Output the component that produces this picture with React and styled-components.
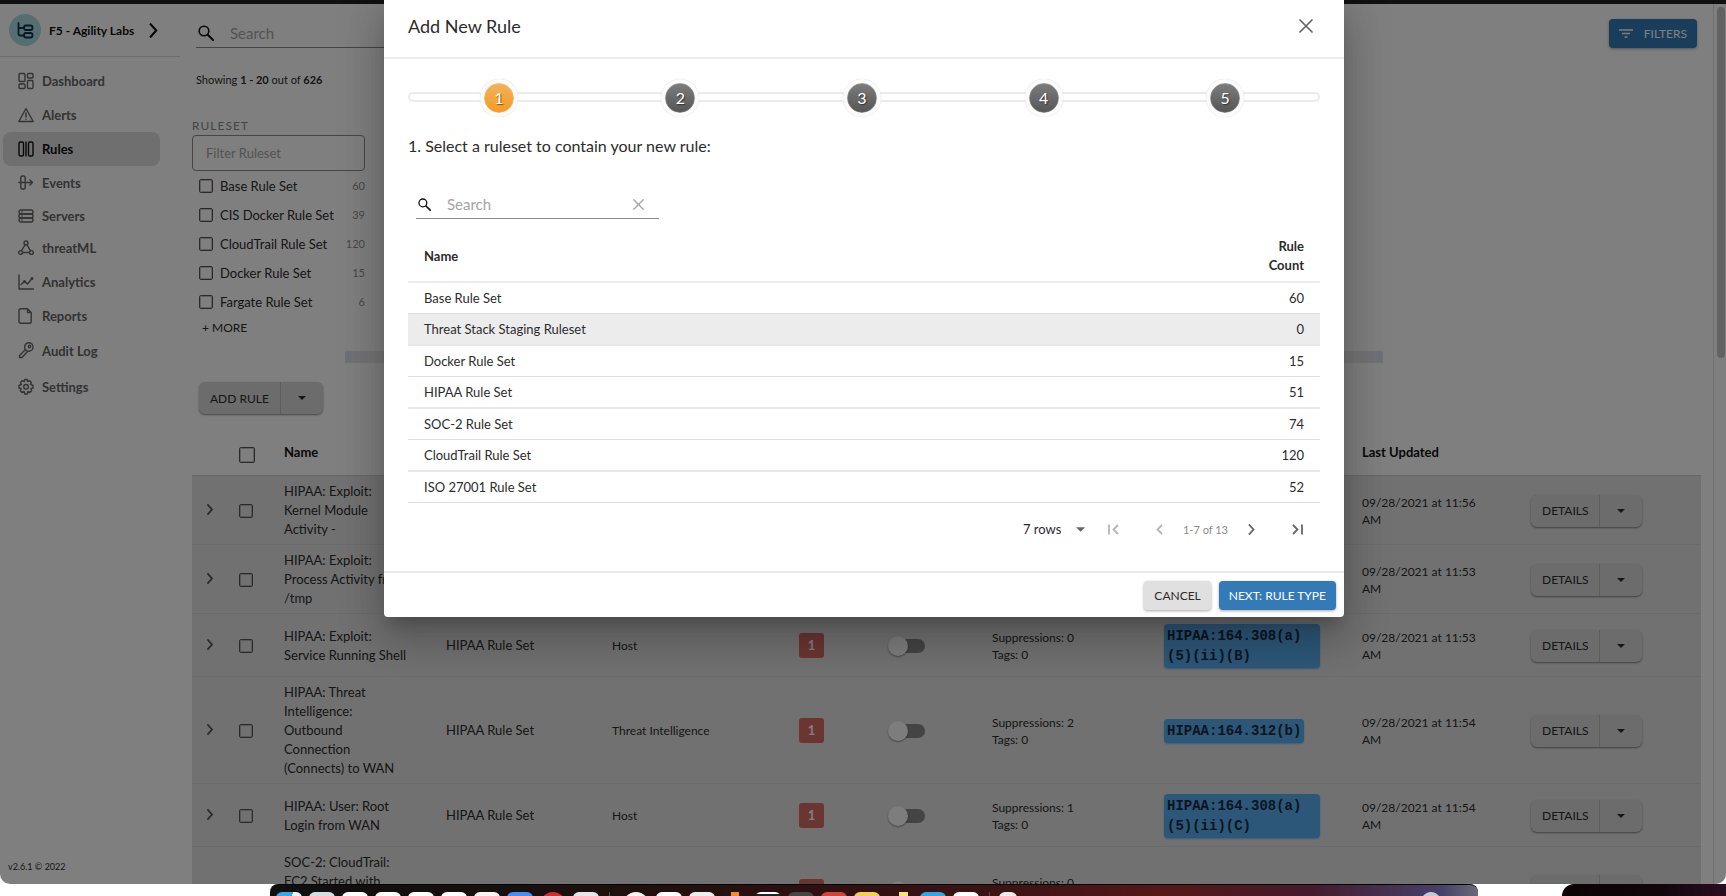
import React from "react";
import styled, { createGlobalStyle, css } from "styled-components";

const GlobalStyle = createGlobalStyle`
  *, *::before, *::after { box-sizing: border-box; }
  body {
    margin: 0;
    background: #fff;
    color: #2c2c2c;
    font-family: Lato, "Open Sans", sans-serif;
    font-size: 13px;
  }
  button, input, select { font: inherit; color: inherit; }
  input::placeholder { color: #a5a5a5; opacity: 1; }
`;

/* ---------- desktop and browser window ---------- */

const Desktop = styled.div`
  position: relative;
  display: flex;
  flex-direction: column;
  height: 100vh;
  overflow: hidden;
`;

const BrowserEdge = styled.div`
  flex: none;
  height: 4px;
  background: #111;
`;

const Window = styled.div`
  position: relative;
  display: flex;
  flex: 1;
  min-height: 0;
  overflow: hidden;
  background: #fff;
  border-radius: 0 0 10px 10px;

  &::after {
    content: "";
    position: absolute;
    inset: 0;
    background: rgba(0, 0, 0, 0.5);
  }
`;

const DockStrip = styled.div`
  display: flex;
  flex: none;
  justify-content: space-between;
  height: 12px;
  padding-left: 270px;
`;

const Dock = styled.div`
  display: flex;
  gap: 7px;
  width: 1208px;
  padding: 7px 6px 0;
  overflow: hidden;
  border-top: 1px solid #000;
  border-radius: 8px 8px 0 0;
  background: linear-gradient(90deg, #0f0f0f 0%, #17100f 20%, #2a0f10 40%, #3a1214 58%, #541818 74%, #451a2c 86%, #46406a 97%, #6b6b78 100%);
`;

const DockIcon = styled.span`
  flex: none;
  width: ${(p) => p.$w || 26}px;
  height: 26px;
  margin-left: ${(p) => p.$gap || 0}px;
  border-radius: ${(p) => (p.$round ? "50%" : "6px")};
  background: ${(p) => p.$c};
`;

const Wallpaper = styled.div`
  width: 164px;
  background: linear-gradient(90deg, #0a0405, #12060a 60%, #2a0d22);
  border-top-left-radius: 12px;
`;

/* ---------- sidebar ---------- */

const Sidebar = styled.aside`
  display: flex;
  flex: none;
  flex-direction: column;
  width: 180px;
`;

const Org = styled.button`
  display: flex;
  align-items: center;
  height: 53px;
  padding: 0 22px 0 9px;
  border: 0;
  border-bottom: 1px solid #dcdcdc;
  background: none;
  color: #111;
  font-size: 12px;
  font-weight: 700;
  text-align: left;
`;

const OrgName = styled.span`
  flex: 1;
  padding-left: 8px;
  white-space: nowrap;
`;

const Nav = styled.nav`
  display: flex;
  flex: 1;
  flex-direction: column;
  padding: 7px 20px 0 3px;
`;

const NavLink = styled.a`
  display: flex;
  align-items: center;
  gap: 8px;
  padding: 8px 15px;
  border-radius: 8px;
  color: ${(p) => (p.$active ? "#111" : "#666")};
  background: ${(p) => (p.$active ? "#dedede" : "none")};
  font-size: 13px;
  font-weight: 700;
  line-height: 16px;
  text-decoration: none;

  svg { flex: none; }
`;

const Version = styled.footer`
  padding: 0 8px 10px;
  font-size: 9px;
  line-height: 14px;
`;

/* ---------- main column ---------- */

const Main = styled.main`
  flex: 1;
  min-width: 0;
  padding: 15px 12px 0;
  overflow: hidden;
`;

const ScrollTrack = styled.div`
  flex: none;
  width: 13px;
  padding: 3px 1px 0 3px;
  border-left: 1px solid #e4e4e4;
`;

const ScrollThumb = styled.div`
  width: 8px;
  height: 40%;
  border-radius: 4px;
  background: #c4c4c4;
`;

const Topbar = styled.div`
  display: flex;
  align-items: flex-start;
  justify-content: space-between;
  padding: 0 4px;
`;

const SearchField = styled.label`
  display: flex;
  align-items: center;
  width: 243px;
  height: 29px;
  margin-left: ${(p) => (p.$inset ? 8 : 0)}px;
  border-bottom: 1px solid #8a8a8a;

  input {
    flex: 1;
    min-width: 0;
    padding: 0 0 0 14px;
    border: 0;
    outline: 0;
    background: none;
    font-size: 15px;
  }
`;

const IconButton = styled.button`
  display: flex;
  align-items: center;
  justify-content: center;
  width: ${(p) => p.$w || 24}px;
  height: 32px;
  padding: 0;
  border: 0;
  background: none;
  color: ${(p) => p.$c || "#666"};
`;

const Button = styled.button`
  display: inline-flex;
  align-items: center;
  justify-content: center;
  gap: 11px;
  height: 29px;
  padding: 0 10px;
  border: 0;
  border-radius: 4px;
  background: ${(p) => (p.$primary ? "#337ab7" : "#e0e0e0")};
  color: ${(p) => (p.$primary ? "#fff" : "#2c2c2c")};
  font-size: 12px;
  white-space: nowrap;
  box-shadow: 0 1px 3px rgba(0, 0, 0, 0.35);
`;

const Showing = styled.p`
  margin: 24px 4px 0;
  font-size: 11px;
  line-height: 16px;
`;

const Facet = styled.section`
  width: 173px;
  margin-top: 30px;
`;

const FacetLabel = styled.label`
  display: block;
  color: #8a8a8a;
  font-size: 12px;
  letter-spacing: 1px;
  line-height: 16px;
`;

const FacetInput = styled.input`
  display: block;
  width: 100%;
  height: 36px;
  margin-top: 1px;
  padding: 0 13px;
  border: 1px solid #8c8c8c;
  border-radius: 4px;
  outline: 0;
  background: none;
  font-size: 13px;
`;

const CheckRow = styled.label`
  display: flex;
  align-items: center;
  height: 29px;
  padding-left: 7px;

  span { flex: 1; padding-left: 7px; white-space: nowrap; }
  em { color: #8f8f8f; font-size: 11px; font-style: normal; }
`;

const Checkbox = styled.input.attrs({ type: "checkbox" })`
  flex: none;
  display: block;
  width: ${(p) => p.$size || 14}px;
  height: ${(p) => p.$size || 14}px;
  margin: 0;
  appearance: none;
  border: 1px solid #555;
  border-radius: 2px;
  outline: 1px solid rgba(85, 85, 85, 0.35);
  outline-offset: -2px;
`;

const More = styled.button`
  display: block;
  padding: 0 10px;
  border: 0;
  background: none;
  font-size: 12px;
  line-height: 24px;
`;

const Strip = styled.div`
  height: 12px;
  margin: 11px 318px 0 153px;
  background: linear-gradient(90deg, #dde2ec, #ebebeb 3%, #ebebeb 97%, #dde2ec);
`;

const Split = styled.div`
  display: inline-flex;
  height: 32px;
  margin: ${(p) => p.$margin || 0};
  border-radius: 6px;
  background: #d8d8d8;
  box-shadow: 0 1px 2px rgba(0, 0, 0, 0.45);

  button {
    display: flex;
    align-items: center;
    justify-content: center;
    padding: 0 11px;
    border: 0;
    background: none;
    font-size: 12px;
    white-space: nowrap;
  }
  button + button { width: 43px; border-left: 1px solid #b8b8b8; }
`;

/* ---------- rules table ---------- */

const RulesTable = styled.table`
  width: 100%;
  margin-top: 18px;
  border-collapse: separate;
  border-spacing: 0;
  table-layout: fixed;

  th {
    height: 44px;
    padding: 0 0 3px;
    border-bottom: 1px solid #cfcfcf;
    color: #111;
    font-weight: 700;
    text-align: left;
  }
  th:nth-child(2) { padding: 2px 0 0; }
  td {
    height: 63px;
    padding: 6px 0 5px;
    border-bottom: 1px solid #d6d6d6;
    background: #e3e3e3;
    font-size: 12px;
    line-height: 17px;
  }
  td:nth-child(3), td:nth-child(4) { font-size: 13px; }
`;

const RuleRow = styled.tr`
  ${(p) => p.$tall && css`
    td { height: 88px; }
    td:nth-child(3) { vertical-align: top; }
  `}
`;

const Cell = styled.div`
  padding: 0 ${(p) => p.$r || 0}px 0 ${(p) => p.$l || 0}px;
  color: ${(p) => p.$c || "inherit"};
  line-height: ${(p) => p.$lh || 17}px;
`;

const Severity = styled.span`
  display: flex;
  align-items: center;
  justify-content: center;
  width: 25px;
  height: 25px;
  border-radius: 3px;
  background: #d66a64;
  color: #fff;
  font-size: 13px;
  font-weight: 700;
`;

const Toggle = styled.input.attrs({ type: "checkbox", role: "switch" })`
  position: relative;
  display: block;
  width: 34px;
  height: 14px;
  margin: 0 0 0 3px;
  appearance: none;
  border-radius: 7px;
  background: #888;

  &::before {
    content: "";
    position: absolute;
    top: -3px;
    left: -3px;
    width: 20px;
    height: 20px;
    border-radius: 50%;
    background: #fafafa;
    box-shadow: 0 1px 2px rgba(0, 0, 0, 0.4);
  }
`;

const Tag = styled.code`
  display: inline-block;
  max-width: 100%;
  padding: 2px 3px;
  border-radius: 4px;
  background: #5aaef0;
  color: #1b2c40;
  font-family: "Liberation Mono", monospace;
  font-size: 14px;
  font-weight: 700;
  line-height: 20px;
  box-shadow: 0 1px 2px rgba(90, 174, 240, 0.8);
`;

/* ---------- dialog ---------- */

const Overlay = styled.div`
  position: absolute;
  inset: 0;
  display: flex;
  align-items: flex-start;
  justify-content: center;
  padding-left: 2px;
`;

const Dialog = styled.section`
  width: 960px;
  max-width: 100%;
  border-radius: 0 0 4px 4px;
  background: #fff;
  box-shadow: 0 11px 15px -7px rgba(0, 0, 0, 0.2),
    0 24px 38px 3px rgba(0, 0, 0, 0.14),
    0 9px 46px 8px rgba(0, 0, 0, 0.12);
`;

const DialogHeader = styled.header`
  display: flex;
  align-items: center;
  justify-content: space-between;
  height: 59px;
  padding: 0 26px 5px 24px;
  border-bottom: 2px solid #ebebeb;

  h2 { margin: 0; font-size: 18px; font-weight: 400; line-height: 28px; }
`;

const DialogBody = styled.div`
  padding: 20px 24px 26px;

  h3 {
    margin: 17px 0 32px;
    font-size: 16px;
    font-weight: 400;
    line-height: 24px;
  }
`;

const Steps = styled.ol`
  position: relative;
  display: grid;
  grid-template-columns: repeat(5, 1fr);
  margin: 0;
  padding: 0 4px 0 0;
  list-style: none;

  &::before {
    content: "";
    position: absolute;
    top: 13px;
    right: 0;
    left: 0;
    height: 10px;
    border: 2px solid #ebebeb;
    border-radius: 5px;
  }
`;

const Step = styled.li`
  position: relative;
  justify-self: center;
  display: flex;
  align-items: center;
  justify-content: center;
  width: 38px;
  height: 38px;
  border: 4px solid #fbfbfb;
  border-radius: 50%;
  background: ${(p) => (p.$active ? "linear-gradient(#f0b35c, #f79a22)" : "linear-gradient(#7d7d7d, #555)")};
  background-clip: padding-box;
  background-color: #fff;
  color: #fff;
  font-size: 16px;
  line-height: 28px;
  text-shadow: 1px 1px 1px rgba(0, 0, 0, 0.5);
  box-shadow: inset 0 0 0 1px rgba(255, 255, 255, 0.2), inset 0 0 1px #e2e2e2, 0 0 1px #c8c8c8;
`;

const RulesetTable = styled.table`
  width: 100%;
  margin-top: 12px;
  border-collapse: separate;
  border-spacing: 0;

  th {
    padding: 6px 16px;
    border-bottom: 2px solid #ebebeb;
    font-weight: 700;
    line-height: 19px;
    text-align: left;
  }
  th:last-child { width: 80px; text-align: right; }
  td {
    height: 31px;
    padding: 0 16px;
    border-bottom: 1px solid #dedede;
  }
  td:last-child { text-align: right; }
  tr:nth-child(even) td { height: 32px; border-bottom: 2px solid #e8e8e8; }
`;

const RulesetRow = styled.tr`
  background: ${(p) => (p.$hover ? "#ececec" : "none")};
`;

const Pager = styled.div`
  display: flex;
  align-items: center;
  justify-content: flex-end;
  margin-top: 10px;
  color: #8a8a8a;
  font-size: 11px;
`;

const RowsSelect = styled.label`
  display: flex;
  align-items: center;
  gap: 14px;
  margin-right: 6px;
  color: #2c2c2c;

  select {
    padding: 0;
    appearance: none;
    border: 0;
    background: none;
    font-size: 13px;
  }
  svg { color: #666; }
`;

const DialogFooter = styled.footer`
  display: flex;
  justify-content: flex-end;
  gap: 8px;
  padding: 8px 8px 7px;
  border-top: 2px solid #ebebeb;
`;

/* ---------- icons ---------- */

const Svg = ({ w = 16, h = 16, box, children, sw = 1.4 }) => (
  <svg width={w} height={h} viewBox={box || `0 0 ${w} ${h}`} fill="none" stroke="currentColor"
    strokeWidth={sw} strokeLinecap="round" strokeLinejoin="round" aria-hidden="true">
    {children}
  </svg>
);

const SearchIcon = ({ size }) => (
  <Svg w={size} h={size} box="0 0 16 16" sw={1.6}>
    <circle cx="6" cy="6" r="4.8" />
    <path d="M9.8 9.8 L15 15" strokeWidth="2" />
  </Svg>
);

const CloseIcon = ({ size }) => (
  <Svg w={size} h={size} box="0 0 14 14" sw={1.7}><path d="M1 1 L13 13 M13 1 L1 13" /></Svg>
);

const Caret = ({ w = 8, h = 4 }) => (
  <svg width={w} height={h} viewBox="0 0 8 4" aria-hidden="true"><path d="M0 0 H8 L4 4 Z" fill="currentColor" /></svg>
);

const OrgIcon = () => (
  <svg width="32" height="32" viewBox="0 0 32 32" fill="none" aria-hidden="true">
    <circle cx="16" cy="16" r="16" fill="#a9dde2" />
    <g stroke="#12304a" strokeWidth="1.8">
      <path d="M9.500 9 V20 Q9.500 21.500 11 21.500 H15 M9.500 14 H15" strokeLinecap="round" />
      <rect x="15" y="11.500" width="8.500" height="4.500" rx="2" />
      <rect x="15" y="19" width="8.500" height="4.500" rx="2" />
    </g>
  </svg>
);

const Chevron = ({ w = 6, h = 11, sw = 1.8 }) => (
  <Svg w={w} h={h} box="0 0 6 11" sw={sw}><path d="M1 1 L5 5.500 L1 10" strokeLinecap="square" strokeLinejoin="miter" /></Svg>
);

const navItems = [
  ["Dashboard", 18, <><rect x="1" y="1.500" width="6" height="8" rx="1" /><rect x="1" y="12" width="6" height="4.500" rx="1" /><rect x="9.500" y="1.500" width="5.500" height="4.500" rx="1" /><rect x="9.500" y="8.500" width="5.500" height="8" rx="1" /></>],
  ["Alerts", 18, <><path d="M8 2.500 L15.200 15.500 H0.800 Z" /><path d="M8 7 V11 M8 13.200 V13.300" /></>],
  ["Rules", 18, <><rect x="1" y="2" width="4.500" height="14" rx="1.500" /><path d="M8 2 V16" /><rect x="10.500" y="2" width="4.500" height="14" rx="1.500" /></>],
  ["Events", 18, <><rect x="2.800" y="2" width="4.400" height="13" rx="1.800" /><path d="M0.800 8.500 H14.500 M12 6 L14.500 8.500 L12 11" /></>],
  ["Servers", 16, <><rect x="1" y="2" width="14" height="4" rx="2" /><rect x="1" y="6" width="14" height="4" rx="1.500" /><rect x="1" y="10" width="14" height="4" rx="2" /><path d="M3.500 4 H4.500 M3.500 8 H4.500 M3.500 12 H4.500" strokeWidth="1" /></>],
  ["threatML", 16, <><circle cx="8" cy="3" r="2" /><circle cx="2.600" cy="12.500" r="1.900" /><circle cx="13.400" cy="12.500" r="1.900" /><path d="M7 5 L3.500 10.700 M9 5 L12.500 10.700 M4.600 12.500 H11.400" /></>],
  ["Analytics", 20, <><path d="M1 3 V17 H15.500 M3 12.500 L6.500 9.500 L9.500 12 L14 6.500" /><circle cx="6.500" cy="9.500" r="0.800" /><circle cx="14" cy="6.500" r="0.800" /></>],
  ["Reports", 16, <path d="M2.500 0.800 H9.500 L13.200 4.500 V13.700 Q13.200 15.200 11.700 15.200 H2.500 Q1 15.200 1 13.700 V2.300 Q1 0.800 2.500 0.800 Z M9.500 0.800 V4.500 H13.200" />],
  ["Audit Log", 22, <><circle cx="10.800" cy="7" r="4.200" /><circle cx="11.500" cy="6.500" r="1.200" /><path d="M7.500 9.500 L1.500 15.500 V17.500 H4 L9.500 11.500" /></>],
  ["Settings", 18, <><path d="M6.800 1.500 H9.200 L9.700 3.600 L11.600 2.600 L13.400 4.400 L12.500 6.300 L15 7.500 V10 L12.800 10.700 L13.700 12.700 L11.900 14.500 L9.900 13.500 L9.200 16 H6.800 L6.100 13.500 L4.100 14.500 L2.300 12.700 L3.200 10.700 L1 10 V7.500 L3.300 6.500 L2.500 4.400 L4.300 2.600 L6.200 3.600 Z" /><circle cx="8" cy="8.800" r="2.300" /></>],
];

/* ---------- data ---------- */

const facets = [
  ["Base Rule Set", 60],
  ["CIS Docker Rule Set", 39],
  ["CloudTrail Rule Set", 120],
  ["Docker Rule Set", 15],
  ["Fargate Rule Set", 6],
];

const columns = [47, 45, 162, 166, 187, 89, 104, 172, 198, 169, 170];

const rules = [
  { name: "HIPAA: Exploit: Kernel Module Activity -", time: "11:56" },
  { name: "HIPAA: Exploit: Process Activity from /tmp", time: "11:53" },
  { name: "HIPAA: Exploit: Service Running Shell", set: "HIPAA Rule Set", type: "Host", sup: 0, tag: ["HIPAA:164.308(a)", "(5)(ii)(B)"], time: "11:53" },
  { name: "HIPAA: Threat Intelligence: Outbound Connection (Connects) to WAN", set: "HIPAA Rule Set", type: "Threat Intelligence", sup: 2, tag: ["HIPAA:164.312(b)"], time: "11:54" },
  { name: "HIPAA: User: Root Login from WAN", set: "HIPAA Rule Set", type: "Host", sup: 1, tag: ["HIPAA:164.308(a)", "(5)(ii)(C)"], time: "11:54" },
  { name: "SOC-2: CloudTrail: EC2 Started with", sup: 0, tall: true },
];

const rulesets = [
  ["Base Rule Set", 60],
  ["Threat Stack Staging Ruleset", 0],
  ["Docker Rule Set", 15],
  ["HIPAA Rule Set", 51],
  ["SOC-2 Rule Set", 74],
  ["CloudTrail Rule Set", 120],
  ["ISO 27001 Rule Set", 52],
];

const dockIcons = [
  { c: "linear-gradient(100deg, #3aa6e6 55%, #eaf3fa 55%)" },
  { c: "radial-gradient(circle at 50% 60%, #26323c 50%, #d9dde0 52%)" },
  { c: "#fff" }, { c: "#fdfdfd" }, { c: "#fff" }, { c: "#fdfdfd" }, { c: "#fbf3f3" },
  { c: "#4a8ff0" },
  { c: "radial-gradient(circle, #fff 20%, #d32f2f 22%)", round: true },
  { c: "#e6e6e6" },
  { c: "#555", w: 1, gap: 3 },
  { c: "radial-gradient(circle at 50% 70%, #2f3a66 45%, #f4f4f4 47%)", round: true, gap: 6 },
  { c: "#fff" },
  { c: "radial-gradient(circle at 50% 60%, #9c4a4a 50%, #eee 52%)" },
  { c: "linear-gradient(90deg, transparent 35%, #f08a24 35%, #f08a24 65%, transparent 65%)" },
  { c: "linear-gradient(#fff 2px, #222 2px)" },
  { c: "#4a4545" },
  { c: "#d0453a" },
  { c: "#f2cf58" },
  { c: "linear-gradient(90deg, transparent 45%, #f5e27a 45%, #f5e27a 80%, transparent 80%)" },
  { c: "#35a5e0" },
  { c: "#fff" },
  { c: "#7b4040", w: 1, gap: 3 },
  { c: "#ececec", w: 18, gap: 2 },
  { c: "#c8c8d4", w: 22, gap: 396, round: true },
];

const Actions = ({ label }) => (
  <Split>
    <button type="button">{label}</button>
    <button type="button" aria-label="More actions"><Caret /></button>
  </Split>
);

export default function App() {
  return (
    <Desktop>
      <GlobalStyle />
      <BrowserEdge />
      <Window>
        <Sidebar>
          <Org type="button">
            <OrgIcon />
            <OrgName>F5 - Agility Labs</OrgName>
            <Chevron w={9} h={15} sw={1.6} />
          </Org>
          <Nav>
            {navItems.map(([label, h, icon]) => (
              <NavLink key={label} href="#" $active={label === "Rules"}>
                <Svg w={16} h={h}>{icon}</Svg>
                {label}
              </NavLink>
            ))}
          </Nav>
          <Version>v2.6.1 © 2022</Version>
        </Sidebar>

        <Main>
          <Topbar>
            <SearchField>
              <IconButton as="span" $w={20} $c="#111"><SearchIcon size={16} /></IconButton>
              <input type="search" placeholder="Search" aria-label="Search rules" />
            </SearchField>
            <Button type="button" $primary>
              <svg width="14" height="9" viewBox="0 0 14 9" aria-hidden="true">
                <path d="M0 1 H14 M3 4.500 H11 M5.500 8 H8.500" stroke="currentColor" strokeWidth="1.600" />
              </svg>
              FILTERS
            </Button>
          </Topbar>

          <Showing>Showing <b>1 - 20</b> out of <b>626</b></Showing>

          <Facet>
            <FacetLabel htmlFor="facet">RULESET</FacetLabel>
            <FacetInput id="facet" placeholder="Filter Ruleset" />
            {facets.map(([name, count]) => (
              <CheckRow key={name}>
                <Checkbox />
                <span>{name}</span>
                <em>{count}</em>
              </CheckRow>
            ))}
            <More type="button">+ MORE</More>
          </Facet>

          <Strip />

          <Split $margin="19px 0 0 7px">
            <button type="button">ADD RULE</button>
            <button type="button" aria-label="More add options"><Caret /></button>
          </Split>

          <RulesTable>
            <colgroup>{columns.map((w, i) => <col key={i} width={w} />)}</colgroup>
            <thead>
              <tr>
                <th />
                <th><Checkbox $size={16} aria-label="Select all rules" /></th>
                <th>Name</th>
                <th colSpan={6} />
                <th>Last Updated</th>
                <th />
              </tr>
            </thead>
            <tbody>
              {rules.map((r) => (
                <RuleRow key={r.name} $tall={r.tall}>
                  <td><Cell $l={15} $c="#555">{!r.tall && <Chevron />}</Cell></td>
                  <td>{!r.tall && <Checkbox aria-label={`Select ${r.name}`} />}</td>
                  <td><Cell $r={38} $lh={19}>{r.name}</Cell></td>
                  <td>{r.set}</td>
                  <td>{r.type}</td>
                  <td>{r.sup !== undefined && <Severity>{r.tall ? "" : 1}</Severity>}</td>
                  <td>{r.sup !== undefined && <Toggle aria-label={`Enable ${r.name}`} />}</td>
                  <td>{r.sup !== undefined && <>Suppressions: {r.sup}<br />Tags: 0</>}</td>
                  <td>
                    {r.tag && (
                      <Cell $r={42}>
                        <Tag>{r.tag.map((t, i) => <React.Fragment key={t}>{i > 0 && <wbr />}{t}</React.Fragment>)}</Tag>
                      </Cell>
                    )}
                  </td>
                  <td>{r.time && <Cell $r={44}>09/28/2021 at {r.time} AM</Cell>}</td>
                  <td><Actions label="DETAILS" /></td>
                </RuleRow>
              ))}
            </tbody>
          </RulesTable>
        </Main>

        <ScrollTrack><ScrollThumb /></ScrollTrack>
      </Window>

      <DockStrip>
        <Dock>
          {dockIcons.map((d, i) => <DockIcon key={i} $c={d.c} $w={d.w} $gap={d.gap} $round={d.round} />)}
        </Dock>
        <Wallpaper />
      </DockStrip>

      <Overlay>
        <Dialog role="dialog" aria-labelledby="dialog-title">
          <DialogHeader>
            <h2 id="dialog-title">Add New Rule</h2>
            <IconButton type="button" aria-label="Close"><CloseIcon size={14} /></IconButton>
          </DialogHeader>
          <DialogBody>
            <Steps>
              {[1, 2, 3, 4, 5].map((n) => <Step key={n} $active={n === 1}>{n}</Step>)}
            </Steps>
            <h3>1. Select a ruleset to contain your new rule:</h3>
            <SearchField $inset>
              <IconButton as="span" $w={17} $c="#111"><SearchIcon size={13} /></IconButton>
              <input type="text" placeholder="Search" aria-label="Search rulesets" />
              <IconButton type="button" aria-label="Clear search" $w={42} $c="#a5a5a5"><CloseIcon size={11} /></IconButton>
            </SearchField>
            <RulesetTable>
              <thead>
                <tr><th>Name</th><th>Rule Count</th></tr>
              </thead>
              <tbody>
                {rulesets.map(([name, count], i) => (
                  <RulesetRow key={name} $hover={i === 1}>
                    <td>{name}</td>
                    <td>{count}</td>
                  </RulesetRow>
                ))}
              </tbody>
            </RulesetTable>
            <Pager>
              <RowsSelect>
                <select aria-label="Rows per page"><option>7 rows</option></select>
                <Caret w={9} h={5} />
              </RowsSelect>
              <IconButton type="button" aria-label="First page" $w={46} $c="#b5b5b5">
                <Svg w={11} h={11} sw={1.8}><path d="M1 0.500 V10.500 M10 1 L5.500 5.500 L10 10" strokeLinecap="butt" strokeLinejoin="miter" /></Svg>
              </IconButton>
              <IconButton type="button" aria-label="Previous page" $w={46} $c="#b5b5b5">
                <Svg w={7} h={11} sw={1.8}><path d="M6 1 L1.500 5.500 L6 10" strokeLinecap="butt" strokeLinejoin="miter" /></Svg>
              </IconButton>
              <span>1-7 of 13</span>
              <IconButton type="button" aria-label="Next page" $w={46}><Chevron w={7} h={11} /></IconButton>
              <IconButton type="button" aria-label="Last page" $w={46}>
                <Svg w={11} h={11} sw={1.8}><path d="M10 0.500 V10.500 M1 1 L5.500 5.500 L1 10" strokeLinecap="butt" strokeLinejoin="miter" /></Svg>
              </IconButton>
            </Pager>
          </DialogBody>
          <DialogFooter>
            <Button type="button">CANCEL</Button>
            <Button type="button" $primary>NEXT: RULE TYPE</Button>
          </DialogFooter>
        </Dialog>
      </Overlay>
    </Desktop>
  );
}
